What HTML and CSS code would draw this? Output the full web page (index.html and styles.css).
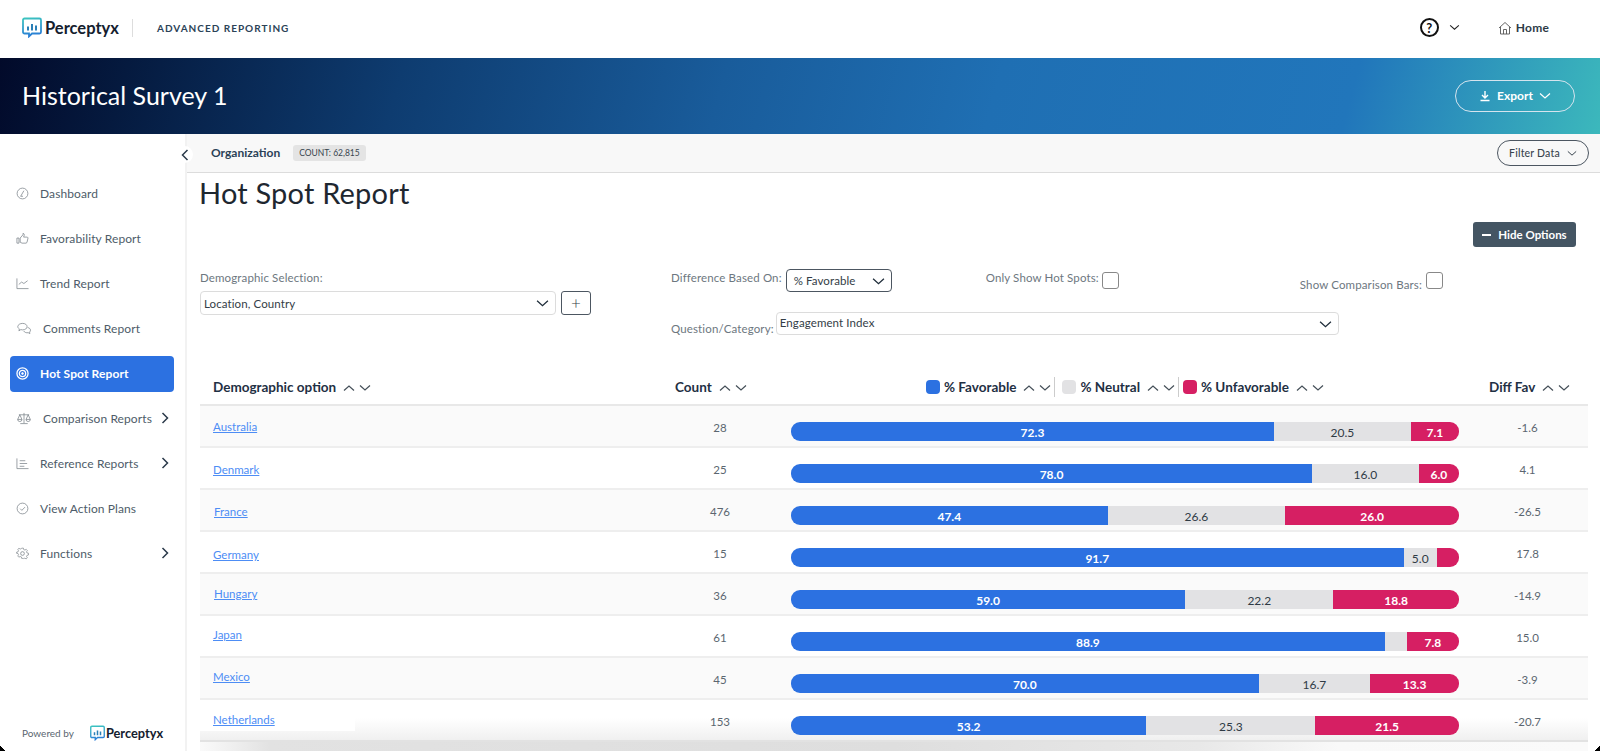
FILE: index.html
```html
<!DOCTYPE html>
<html lang="en">
<head>
<meta charset="utf-8">
<title>Hot Spot Report</title>
<link rel="stylesheet" href="styles.css">
</head>
<body>
<svg class="defs" width="0" height="0" aria-hidden="true">
  <defs>
    <linearGradient id="logoGrad" x1="0" y1="0" x2="0.2" y2="1">
      <stop offset="0" stop-color="#3cc4bf"/><stop offset="1" stop-color="#2a7fd6"/>
    </linearGradient>
    <symbol id="logo" viewBox="0 0 20 20">
      <path d="M2.5 1h15a1.5 1.5 0 0 1 1.5 1.5v12a1.5 1.5 0 0 1-1.5 1.5H10l-3 2.9V16H2.500A1.500 1.500 0 0 1 1 14.500v-12A1.500 1.500 0 0 1 2.500 1z" fill="none" stroke="url(#logoGrad)" stroke-width="1.800"/>
      <path d="M6 9v4M10 6.500V13M14 8v5" stroke="#2a7fb6" stroke-width="2" fill="none"/>
    </symbol>
    <symbol id="up" viewBox="0 0 12 8"><path d="M1 6.500L6 2l5 4.500" fill="none" stroke="currentColor" stroke-width="1.200"/></symbol>
    <symbol id="down" viewBox="0 0 12 8"><path d="M1 1.500L6 6l5-4.500" fill="none" stroke="currentColor" stroke-width="1.200"/></symbol>
    <symbol id="right" viewBox="0 0 8 12"><path d="M1.500 1L6.500 6l-5 5" fill="none" stroke="currentColor" stroke-width="1.500"/></symbol>
  </defs>
</svg>

<header class="topbar">
  <div class="brand">
    <svg class="logo" aria-hidden="true"><use href="#logo"/></svg>
    <span class="brand-name">Perceptyx</span>
  </div>
  <span class="brand-divider"></span>
  <span class="product">ADVANCED REPORTING</span>
  <div class="top-actions">
    <span class="help">?</span>
    <svg class="help-caret" aria-hidden="true"><use href="#down"/></svg>
    <a class="home">
      <svg class="home-icon" viewBox="0 0 14 14" aria-hidden="true"><path d="M1 7l6-5.500L13 7M2.500 6v7h9V6M5.500 13V8.500h3V13" fill="none" stroke="#555" stroke-width="0.900"/></svg>
      Home
    </a>
  </div>
</header>

<section class="banner">
  <h1 class="survey">Historical Survey 1</h1>
  <button class="export">
    <svg class="export-icon" viewBox="0 0 12 12" aria-hidden="true"><path d="M6 1v6.500M3 5l3 3 3-3M1.500 10.500h9" fill="none" stroke="#fff" stroke-width="1.400"/></svg>
    Export
    <svg class="export-caret" aria-hidden="true"><use href="#down"/></svg>
  </button>
</section>

<div class="layout">
  <aside class="sidebar">
    <button class="collapse" aria-label="Collapse"><svg class="collapse-icon" aria-hidden="true"><use href="#right"/></svg></button>
    <nav class="nav">
      <a class="nav-item">
        <svg class="nav-icon" viewBox="0 0 14 14"><circle cx="7" cy="7" r="5.800"/><path d="M5 10l3.500-6M5 10h2.500"/></svg>
        <span>Dashboard</span>
      </a>
      <a class="nav-item">
        <svg class="nav-icon" viewBox="0 0 14 14"><path d="M1 6.500h2.200V12H1zM4.500 6.500L7.500 3V1.500c1.300 0 1.700 1.300 1.200 2.500L8.200 5.500h4l.8.800-1.200 5-1 .7H6.500L4.500 11z"/></svg>
        <span>Favorability Report</span>
      </a>
      <a class="nav-item">
        <svg class="nav-icon" viewBox="0 0 14 14"><path d="M1 1.500V12.500H13.500M3 8l3-2.500 2.500 1.500L12.500 4"/></svg>
        <span>Trend Report</span>
      </a>
      <a class="nav-item nav-wide">
        <svg class="nav-icon nav-icon-wide" viewBox="0 0 16 14"><path d="M6.500 1.500c2.800 0 4.800 1.500 4.800 3.500S9.300 8.500 6.500 8.500c-.7 0-1.300-.1-1.900-.3L2.500 9.500l.5-2C2 6.800 1.300 6 1.300 5c0-2 2.400-3.500 5.200-3.500z"/><path d="M12 6c1.800.3 3 1.400 3 2.800 0 .8-.4 1.500-1 2l.3 1.700-1.800-1c-1.800.4-4-.3-4.800-1.800"/></svg>
        <span>Comments Report</span>
      </a>
      <a class="nav-item is-active">
        <svg class="nav-icon" viewBox="0 0 14 14"><circle cx="7" cy="7" r="6" stroke-width="1.400"/><circle cx="7" cy="7" r="3.400" stroke-width="1.400"/><circle cx="7" cy="7" r="1" fill="#fff"/></svg>
        <span>Hot Spot Report</span>
      </a>
      <a class="nav-item nav-wide">
        <svg class="nav-icon nav-icon-wide" viewBox="0 0 16 14"><path d="M8 1v11M4 12.500h8M2.500 3h11M3.500 3L1.200 8h4.600zM12.500 3l-2.300 5h4.600zM1.200 8a2.300 2.300 0 0 0 4.600 0M10.200 8a2.300 2.300 0 0 0 4.600 0"/></svg>
        <span>Comparison Reports</span>
        <svg class="nav-more" aria-hidden="true"><use href="#right"/></svg>
      </a>
      <a class="nav-item">
        <svg class="nav-icon" viewBox="0 0 14 14"><path d="M1 1.500V12.500H13.500M4 4h6M4 7h8M4 10h5"/></svg>
        <span>Reference Reports</span>
        <svg class="nav-more" aria-hidden="true"><use href="#right"/></svg>
      </a>
      <a class="nav-item">
        <svg class="nav-icon" viewBox="0 0 14 14"><circle cx="7" cy="7" r="5.800"/><path d="M4.500 7.200L6.300 9l3.400-3.500"/></svg>
        <span>View Action Plans</span>
      </a>
      <a class="nav-item">
        <svg class="nav-icon" viewBox="0 0 14 14"><circle cx="7" cy="7" r="2"/><path d="M6 1h2l.4 1.700 1.400.6 1.500-.9 1.300 1.400-.9 1.500.6 1.400 1.700.3v2l-1.700.4-.6 1.400.9 1.500-1.400 1.300-1.500-.9-1.400.6L8 13H6l-.4-1.700-1.400-.6-1.500.9-1.300-1.400.9-1.500-.6-1.400L0 7V5.800l1.700-.4.600-1.400-.9-1.500L2.800 1.200l1.500.9 1.400-.6z" transform="translate(.6 .3) scale(.92)"/></svg>
        <span>Functions</span>
        <svg class="nav-more" aria-hidden="true"><use href="#right"/></svg>
      </a>
    </nav>
    <div class="powered">
      <span class="powered-label">Powered by</span>
      <svg class="powered-logo" aria-hidden="true"><use href="#logo"/></svg>
      <span class="powered-name">Perceptyx</span>
    </div>
  </aside>

  <main class="content">
    <div class="toolbar">
      <span class="org">Organization</span>
      <span class="count-pill">COUNT: 62,815</span>
      <button class="filter">Filter Data <svg class="filter-caret" aria-hidden="true"><use href="#down"/></svg></button>
    </div>

    <div class="page">
      <h2 class="title">Hot Spot Report</h2>
      <div class="hide-row">
        <button class="hide"><span class="hide-dash"></span>Hide Options</button>
      </div>

      <div class="options">
        <div class="opt-demo">
          <label class="opt-label">Demographic Selection:</label>
          <div class="demo-controls">
            <div class="select select-demo">Location, Country<svg class="select-caret" aria-hidden="true"><use href="#down"/></svg></div>
            <button class="add">+</button>
          </div>
        </div>
        <div class="opt-mid">
          <div class="opt-line">
            <span class="opt-label">Difference Based On:</span>
            <div class="select select-diff">% Favorable<svg class="select-caret" aria-hidden="true"><use href="#down"/></svg></div>
            <span class="opt-label label-hot">Only Show Hot Spots:</span>
            <span class="check"></span>
            <span class="opt-label label-comp">Show Comparison Bars:</span>
            <span class="check check-comp"></span>
          </div>
          <div class="opt-line opt-line-q">
            <span class="opt-label label-q">Question/Category:</span>
            <div class="select select-q">Engagement Index<svg class="select-caret" aria-hidden="true"><use href="#down"/></svg></div>
          </div>
        </div>
      </div>

      <div class="table">
        <div class="thead">
          <div class="th th-name">Demographic option<span class="sort"><svg><use href="#up"/></svg><svg><use href="#down"/></svg></span></div>
          <div class="th th-count">Count<span class="sort"><svg><use href="#up"/></svg><svg><use href="#down"/></svg></span></div>
          <div class="th th-bars">
            <i class="swatch swatch-fav"></i>% Favorable<span class="sort"><svg><use href="#up"/></svg><svg><use href="#down"/></svg></span>
            <b class="th-sep"></b>
            <i class="swatch swatch-neu"></i>% Neutral<span class="sort"><svg><use href="#up"/></svg><svg><use href="#down"/></svg></span>
            <b class="th-sep th-sep-last"></b>
            <i class="swatch swatch-unf"></i>% Unfavorable<span class="sort"><svg><use href="#up"/></svg><svg><use href="#down"/></svg></span>
          </div>
          <div class="th th-diff">Diff Fav<span class="sort"><svg><use href="#up"/></svg><svg><use href="#down"/></svg></span></div>
        </div>

        <div class="row"><a class="name">Australia</a><span class="num">28</span>
          <div class="bar"><span class="seg fav" style="width:72.3%">72.3</span><span class="seg neu" style="width:20.5%">20.5</span><span class="seg unf">7.1</span></div><span class="diff">-1.6</span></div>
        <div class="row"><a class="name name-lo">Denmark</a><span class="num">25</span>
          <div class="bar"><span class="seg fav" style="width:78%">78.0</span><span class="seg neu" style="width:16%">16.0</span><span class="seg unf">6.0</span></div><span class="diff">4.1</span></div>
        <div class="row"><a class="name name-in name-lo">France</a><span class="num">476</span>
          <div class="bar"><span class="seg fav" style="width:47.4%">47.4</span><span class="seg neu" style="width:26.6%">26.6</span><span class="seg unf">26.0</span></div><span class="diff">-26.5</span></div>
        <div class="row"><a class="name name-lower">Germany</a><span class="num">15</span>
          <div class="bar"><span class="seg fav" style="width:91.7%">91.7</span><span class="seg neu" style="width:5%">5.0</span><span class="seg unf"></span></div><span class="diff">17.8</span></div>
        <div class="row"><a class="name name-in name-hi">Hungary</a><span class="num">36</span>
          <div class="bar"><span class="seg fav" style="width:59%">59.0</span><span class="seg neu" style="width:22.2%">22.2</span><span class="seg unf">18.8</span></div><span class="diff">-14.9</span></div>
        <div class="row"><a class="name name-higher">Japan</a><span class="num">61</span>
          <div class="bar"><span class="seg fav" style="width:88.9%">88.9</span><span class="seg neu" style="width:3.3%"></span><span class="seg unf">7.8</span></div><span class="diff">15.0</span></div>
        <div class="row"><a class="name name-higher">Mexico</a><span class="num">45</span>
          <div class="bar"><span class="seg fav" style="width:70%">70.0</span><span class="seg neu" style="width:16.7%">16.7</span><span class="seg unf">13.3</span></div><span class="diff">-3.9</span></div>
        <div class="row row-last"><a class="name name-hi">Netherlands</a><span class="num">153</span>
          <div class="bar"><span class="seg fav" style="width:53.2%">53.2</span><span class="seg neu" style="width:25.3%">25.3</span><span class="seg unf">21.5</span></div><span class="diff">-20.7</span></div>
      </div>
    </div>
    <div class="fade"></div>
  </main>
</div>
<span class="corner corner-l"></span>
<span class="corner corner-r"></span>
</body>
</html>
```
FILE: styles.css
```css
* { box-sizing: border-box; }
html, body { margin: 0; height: 751px; overflow: hidden; background: #fff; }
body { position: relative; font-family: "Lato", "Liberation Sans", sans-serif; color: #2b3a4a; }
button { font-family: inherit; cursor: pointer; }
a { text-decoration: none; color: inherit; }
.defs { position: absolute; }

/* window corners */
.corner { position: absolute; bottom: 0; width: 6px; height: 6px; z-index: 5; }
.corner-l { left: 0; background: linear-gradient(45deg, #000 45%, transparent 50%); }
.corner-r { right: 0; background: linear-gradient(-45deg, #000 45%, transparent 50%); }

/* top bar */
.topbar { height: 58px; display: flex; align-items: center; padding: 0 0 3px 22px; background: #fff; }
.brand { display: flex; align-items: center; width: 110px; }
.logo { width: 20px; height: 21px; margin-right: 3px; }
.brand-name { font-size: 16.500px; font-weight: 700; color: #14202e; }
.brand-divider { width: 1px; height: 18px; background: #ddd; }
.product { margin-left: 24px; font-size: 10px; font-weight: 700; letter-spacing: 1px; color: #2b4257; }
.top-actions { margin-left: auto; display: flex; align-items: center; padding-right: 51px; }
.help { width: 19px; height: 19px; border: 2px solid #111; border-radius: 50%; display: flex; align-items: center; justify-content: center; font-size: 13px; font-weight: 700; color: #111; }
.help-caret { width: 11px; height: 7px; margin-left: 10px; color: #222; }
.home { display: flex; align-items: center; margin-left: 38px; font-size: 12px; font-weight: 700; color: #2d3b47; letter-spacing: 0.2px; }
.home-icon { width: 14px; height: 14px; margin-right: 4px; }

/* banner */
.banner { height: 76px; display: flex; align-items: center; justify-content: space-between; padding: 0 25px 0 22px; background: linear-gradient(105deg, #020a2a 0%, #051a3f 8%, #0e3c70 25%, #195c9b 45%, #1f6fb3 62%, #2176bb 84%, #3cb8bc 100%); }
.survey { margin: 0 0 2px; font-size: 25px; font-weight: 400; color: #fff; }
.export { width: 120px; height: 32px; border: 1px solid #d5e4ee; border-radius: 16px; background: transparent; color: #fff; display: flex; align-items: center; justify-content: center; font-size: 12px; font-weight: 700; padding: 0 0 1px; }
.export-icon { width: 12px; height: 12px; margin-right: 6px; }
.export-caret { width: 12px; height: 8px; margin-left: 6px; color: #fff; }

/* layout */
.layout { display: flex; height: 617px; }
.sidebar { position: relative; width: 187px; flex: none; border-right: 2px solid #f2f2f2; display: flex; flex-direction: column; padding: 42px 11px 0 10px; }
.collapse { position: absolute; top: 12px; right: -8px; width: 17px; height: 17px; border: 0; border-radius: 50%; background: #fff; padding: 0; display: flex; align-items: center; justify-content: center; z-index: 2; }
.collapse-icon { width: 8px; height: 12px; color: #2b3a4a; transform: rotate(180deg); }
.nav { display: flex; flex-direction: column; gap: 9px; }
.nav-item { height: 36px; display: flex; align-items: center; padding: 0 0 2px 6px; font-size: 12px; color: #4e5c69; border-radius: 4px; letter-spacing: 0.1px; }
.nav-icon { width: 13px; height: 13px; margin-right: 11px; flex: none; fill: none; stroke: #7a8288; stroke-width: 0.800; }
.nav-icon-wide { width: 16px; margin-right: 11px; }
.nav-more { width: 8px; height: 12px; margin-left: auto; margin-right: 5px; color: #2b3a4a; }
.is-active { background: #2c71e1; color: #fff; font-weight: 700; }
.is-active .nav-icon { stroke: #fff; }
.powered { margin-top: auto; height: 26px; display: flex; align-items: flex-start; padding-left: 12px; }
.powered-label { font-size: 10px; color: #5a6670; margin-right: 16px; line-height: 16px; }
.powered-logo { width: 15px; height: 16px; margin-right: 1px; }
.powered-name { font-size: 12.800px; font-weight: 700; color: #14202e; line-height: 16px; }

/* main */
.content { position: relative; flex: 1; min-width: 0; }
.toolbar { height: 39px; display: flex; align-items: center; padding: 0 11px 0 24px; background: #f8f8f8; border-bottom: 1px solid #dcdcdc; }
.org { margin-bottom: 2px; font-size: 12px; font-weight: 700; color: #2b4257; }
.count-pill { margin-left: 13px; height: 16px; padding: 0 6px; display: flex; align-items: center; border-radius: 3px; background: #e4e4e4; font-size: 8.500px; color: #39444e; }
.filter { margin-left: auto; width: 92px; height: 26px; border: 1px solid #4c5661; border-radius: 13px; background: transparent; color: #39444e; font-size: 10.500px; letter-spacing: 0.2px; font-weight: 500; display: flex; align-items: center; justify-content: center; padding: 0; }
.filter-caret { width: 10px; height: 7px; margin-left: 7px; color: #39444e; }

.page { padding: 0 12px 0 13px; }
.title { margin: 0 0 0 -1px; font-size: 29px; line-height: 40px; font-weight: 400; color: #1e2730; letter-spacing: 0.2px; }
.hide-row { display: flex; justify-content: flex-end; margin-top: 9px; padding-right: 12px; }
.hide { width: 103px; height: 25px; border: 0; border-radius: 3px; background: #445563; color: #fff; font-size: 11.500px; font-weight: 700; display: flex; align-items: center; justify-content: center; padding: 0; }
.hide-dash { width: 9px; height: 2px; background: #fff; margin-right: 7px; }

.options { display: flex; height: 100px; margin-top: 20px; }
.opt-demo { width: 471px; margin-top: -1px; }
.opt-label { font-size: 11.500px; color: #6d7780; letter-spacing: 0.13px; white-space: nowrap; }
.demo-controls { display: flex; gap: 5px; margin-top: 6px; }
.select { position: relative; display: flex; align-items: center; height: 24px; border: 1px solid #dcdcdc; border-radius: 4px; font-size: 11.500px; color: #333d46; padding-left: 3px; background: #fff; letter-spacing: 0.1px; }
.select-caret { position: absolute; right: 6px; top: 7px; width: 13px; height: 9px; color: #1f2d3a; stroke-width: 1.400; }
.select-demo { width: 356px; }
.add { width: 30px; height: 24px; border: 1px solid #4c5661; border-radius: 3px; background: #fff; font-size: 17px; line-height: 20px; padding: 0; color: #333d46; font-weight: 300; }
.opt-mid { flex: 1; }
.opt-line { display: flex; align-items: flex-start; height: 42px; }
.opt-line .opt-label { padding-top: 4px; }
.select-diff { width: 106px; height: 23px; margin: 2px 0 0 4px; border-color: #4c5661; padding-left: 7px; }
.opt-line .label-hot { margin-left: 94px; }
.check { width: 17px; height: 17px; margin: 5px 0 0 3px; border: 1px solid #888; border-radius: 3px; flex: none; }
.opt-line .label-comp { margin-left: 181px; padding-top: 11px; }
.check-comp { margin-left: 4px; }
.opt-line-q .label-q { padding-top: 13px; }
.select-q { width: 563px; height: 23px; margin: 3px 0 0 2px; align-items: flex-start; padding-top: 3px; }

.thead { display: grid; grid-template-columns: 462px 124px 691px 1fr; height: 39px; padding-top: 2px; align-items: center; border-bottom: 2px solid #e8e8e8; }
.th { display: flex; align-items: center; font-size: 13.500px; font-weight: 700; color: #1f3044; white-space: nowrap; }
.th-name { padding-left: 13px; }
.th-count { padding-left: 13px; }
.th-bars { padding-left: 140px; }
.sort { display: inline-flex; gap: 4px; margin-left: 7px; padding-top: 3px; color: #444f58; }
.sort svg { width: 12px; height: 8px; }
.th-sep { width: 1px; height: 20px; background: #ccc; margin: 0 7px 0 3px; }
.th-sep-last { margin-right: 4px; }
.swatch { width: 14px; height: 14px; border-radius: 4px; margin-right: 4px; flex: none; }
.swatch-fav { background: #2c71e1; }
.swatch-neu { background: #e2e2e4; }
.swatch-unf { background: #d61f63; }
.th-diff { padding-left: 12px; }

.row { display: grid; grid-template-columns: 455px 130px 668px 1fr; height: 42px; align-items: start; border-bottom: 2px solid #eeeeee; font-size: 11.500px; color: #5b6670; }
.row:nth-child(even) { background: #fafafa; }
.row:nth-child(odd) { background: #fff; }
.row.row-last { position: relative; background: linear-gradient(to bottom, #fff 45%, #f0f0f0 100%); border-bottom-color: #e2e2e2; }
.row-last::before { content: ""; position: absolute; left: 0; top: 0; width: 155px; height: 31px; background: #fff; }
.name { position: relative; margin: 14px 0 0 13px; color: #4d8df5; text-decoration: underline; font-size: 11.500px; justify-self: start; }
.name-in { margin-left: 14px; }
.name-lo { margin-top: 15px; }
.name-lower { margin-top: 16px; }
.name-hi { margin-top: 13px; }
.name-higher { margin-top: 12px; }
.num { margin-top: 15px; text-align: center; }
.bar { margin: 16px 0 0 6px; display: flex; height: 19px; width: 668px; border-radius: 9px; overflow: hidden; font-size: 12px; }
.seg { display: flex; align-items: center; justify-content: center; height: 100%; padding-top: 1px; }
.fav { background: #2c71e1; color: #fff; font-weight: 700; }
.neu { background: #e2e2e4; color: #2f3a44; }
.unf { background: #d61f63; color: #fff; font-weight: 700; flex: 1; }
.diff { margin-top: 15px; text-align: center; padding-left: 14px; }

.fade { position: absolute; left: 13px; right: 12px; bottom: 0; height: 9px; pointer-events: none; background: linear-gradient(to right, #fafafa 0%, #e2e2e2 5%, #dedede 50%, #e8e8e8 72%, #f9f9f9 82%, #fafafa 100%); }
```
